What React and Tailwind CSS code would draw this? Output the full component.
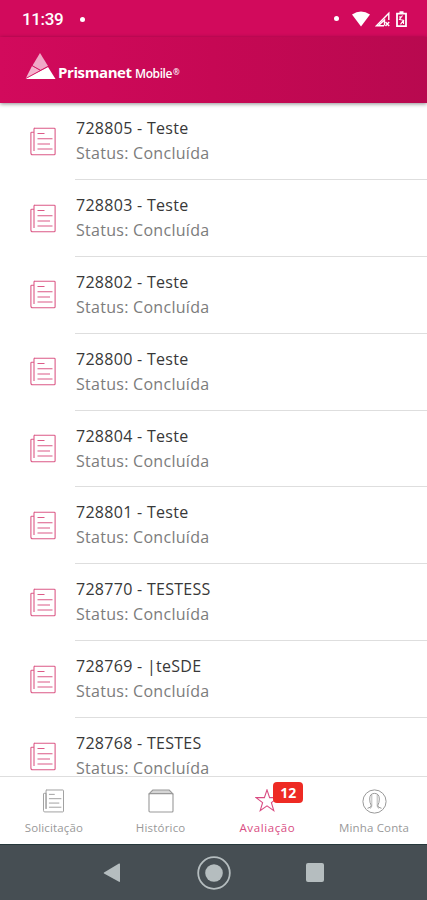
const requests = [
  { id: 728805, title: 'Teste' },
  { id: 728803, title: 'Teste' },
  { id: 728802, title: 'Teste' },
  { id: 728800, title: 'Teste' },
  { id: 728804, title: 'Teste' },
  { id: 728801, title: 'Teste' },
  { id: 728770, title: 'TESTESS' },
  { id: 728769, title: '|teSDE' },
  { id: 728768, title: 'TESTES' },
]

const NewsIcon = ({ className }) => (
  <svg className={className} viewBox="0 0 26 29" fill="none" stroke="currentColor" strokeWidth="1.1">
    <path d="M4 1.2h20.2q.9 0 .9.9v24.6q0 1-1 1H2.5q-1.6 0-1.6-1.6V6q0-.8.8-.8H4" />
    <path d="M4 24V2q0-.8.8-.8M4 5.2V24" />
    <path d="M7.5 6.5h7M7.5 11.7h15M7.5 17h12.5M7.5 22h15" />
  </svg>
)

const BoxIcon = ({ className }) => (
  <svg className={className} viewBox="0 0 26 24" fill="none" stroke="currentColor" strokeWidth="1.1">
    <rect x="1" y="4.5" width="24" height="18.5" rx="1" />
    <path d="M1.2 4.7 4.8 1h16.4l3.6 3.7z" fill="currentColor" fillOpacity=".4" />
  </svg>
)

const StarIcon = ({ className }) => (
  <svg className={className} viewBox="0 0 24 24" fill="none" stroke="currentColor" strokeWidth="1.1">
    <path d="M12 .8 14.6 8.6h8.3l-6.5 5 2.4 8L12 16.8l-6.8 4.8 2.4-8-6.5-5h8.3z" />
  </svg>
)

const UserIcon = ({ className }) => (
  <svg className={className} viewBox="0 0 25 25" fill="none" stroke="currentColor" strokeWidth="1">
    <circle cx="12.5" cy="12.5" r="11.6" />
    <path d="M5.5 19.3q4.2-.8 3.7-3-1.5-2.4-1.5-6.3 0-5.6 4.8-5.6t4.8 5.6q0 3.9-1.5 6.3-.5 2.2 3.7 3" />
    <path d="M9.8 5.5v11.5q0 1.5-1.8 2.5M15.2 5.5v11.5q0 1.5 1.8 2.5" strokeWidth=".7" />
  </svg>
)

const tabs = [
  { label: 'Solicitação', icon: NewsIcon, size: 'w-[23px] h-6', tracking: 'tracking-[0.15px]' },
  { label: 'Histórico', icon: BoxIcon, size: 'w-[26px] h-6', tracking: 'tracking-[0.2px]' },
  { label: 'Avaliação', icon: StarIcon, size: 'w-6 h-6', tracking: 'tracking-[0.6px]', active: true, badge: 12 },
  { label: 'Minha Conta', icon: UserIcon, size: 'w-[25px] h-[25px]', tracking: 'tracking-[0.15px]' },
]

const StatusBar = () => (
  <div className="flex h-[37px] shrink-0 items-center justify-between bg-[#d20a5c] pt-0.5 pl-[22px] pr-5 text-white">
    <div className="flex items-center gap-4">
      <span className="w-[42px] whitespace-nowrap font-['Roboto',sans-serif] text-[17px] font-medium leading-none tracking-[-0.35px]">11:39</span>
      <span className="h-[5px] w-[5px] rounded-full bg-white" />
    </div>
    <div className="-mt-0.5 flex items-center">
      <span className="mr-[13px] h-[5px] w-[5px] rounded-full bg-white" />
      <svg className="mr-[5px] h-4 w-[18px]" viewBox="0 0 18 16" fill="currentColor">
        <path d="M0 3.5Q9-2.5 18 3.5L9 15.5z" />
      </svg>
      <svg className="mr-1.5 h-4 w-[15px]" viewBox="0 0 15 16" fill="none" stroke="currentColor" strokeWidth="1.4">
        <path d="M9 14.8H1.5L13.8 2.2V9" />
        <path d="M4 14 9.5 9v5.5" />
        <path d="m10.5 11 3.7 4m0-4-3.7 4" />
      </svg>
      <svg className="h-4 w-[11px]" viewBox="0 0 11 16" fill="none" stroke="currentColor" strokeWidth="1.8">
        <path d="M1 2.7h9v12.5H1zM3.5 1.2h4" />
        <path d="M6.5 4.5 3.5 8.5l4 .8-3 4M4 5v3.5M7.5 9v4" strokeWidth="1.1" />
      </svg>
    </div>
  </div>
)

const Header = () => (
  <header className="z-10 flex h-[66px] shrink-0 items-start bg-gradient-to-r from-[#d20a5c] via-[#c60854] to-[#b8094f] pt-[15px] pl-[25px] text-white shadow-[0_1px_4px_rgba(0,0,0,0.45)]">
    <svg className="h-[28px] w-[31px] shrink-0" viewBox="0 0 31 28">
      <path d="M15 1 7.5 13.5 15.5 18l7.5-4z" fill="#f0a8c7" />
      <path d="M7 14 15 18.5.8 26.2z" fill="#f3b4ce" />
      <path d="M.5 27 23 15l7.5 12z" fill="#fff" />
      <path d="m7 13.5 8.7 5M.5 26.5 23 14.5" stroke="#d20a5c" strokeWidth=".5" />
    </svg>
    <div className="flex items-baseline pt-[10px] pl-0.5 font-['Open_Sans',sans-serif] leading-5">
      <span className="w-[76px] whitespace-nowrap text-[15px] font-bold tracking-[-0.4px]">Prismanet</span>
      <span className="whitespace-nowrap pl-px text-[12px] font-semibold tracking-[-0.4px]">Mobile</span>
      <span className="relative -top-[3px] pl-px text-[8px] font-semibold leading-none">®</span>
    </div>
  </header>
)

const RequestRow = ({ id, title }) => (
  <li className="flex h-[76.9px] shrink-0">
    <div className="w-[75px] shrink-0 pt-[23.7px] pl-[30px]">
      <NewsIcon className="h-[29px] w-[26px] text-[#dc5a87]" />
    </div>
    <div className="flex-1 border-b border-[#dedede] pt-[13px] pl-px tracking-[0.28px]">
      <p className="text-[16px] leading-[25px] text-[#383838]">{id} - {title}</p>
      <p className="text-[16px] leading-[25px] text-[#7c7c7c]">Status: Concluída</p>
    </div>
  </li>
)

const TabBar = () => (
  <nav className="grid h-[68px] shrink-0 grid-cols-4 border-t border-[#dedede] bg-white">
    {tabs.map(({ label, icon: Icon, size, tracking, active, badge }) => (
      <div key={label} className={`flex flex-col items-center pt-3 pl-px ${active ? 'text-[#d94c82]' : 'text-[#999999]'}`}>
        <div className="relative flex h-6 items-center">
          <Icon className={size} />
          {badge && (
            <span className="absolute -top-[7px] left-[18px] flex h-[21px] w-[30px] items-center justify-center rounded-[4px] bg-[#ee2b24] text-[14px] font-bold text-white">
              {badge}
            </span>
          )}
        </div>
        <span className={`mt-[7px] whitespace-nowrap text-[11.5px] leading-4 ${tracking}`}>{label}</span>
      </div>
    ))}
  </nav>
)

const SystemNav = () => (
  <div className="flex h-14 shrink-0 items-center justify-between border-t border-[#26383b] bg-[#464e53] pl-[103px] pr-[103px] text-[#b5bdbf]">
    <svg className="h-5 w-[18px]" viewBox="0 0 18 20" fill="currentColor">
      <path d="M1 9.6 16 .5q1-.4 1 .7v17q0 1-1 .6L1 10.4q-.7-.4 0-.8" />
    </svg>
    <svg className="h-[34px] w-[34px]" viewBox="0 0 34 34">
      <circle cx="17" cy="17" r="15.8" fill="none" stroke="currentColor" strokeWidth="1.8" />
      <circle cx="17" cy="17" r="8.8" fill="currentColor" />
    </svg>
    <span className="h-[19px] w-[18px] rounded-[2px] bg-[#b5bdbf]" />
  </div>
)

const App = () => {
  return (
    <div className="flex h-[900px] w-[427px] flex-col overflow-hidden bg-white font-['Open_Sans',sans-serif]">
      <StatusBar />
      <Header />
      <ul className="min-h-0 flex-1 overflow-hidden">
        {requests.map((request) => (
          <RequestRow key={request.id} {...request} />
        ))}
      </ul>
      <TabBar />
      <SystemNav />
    </div>
  )
}

export default App
